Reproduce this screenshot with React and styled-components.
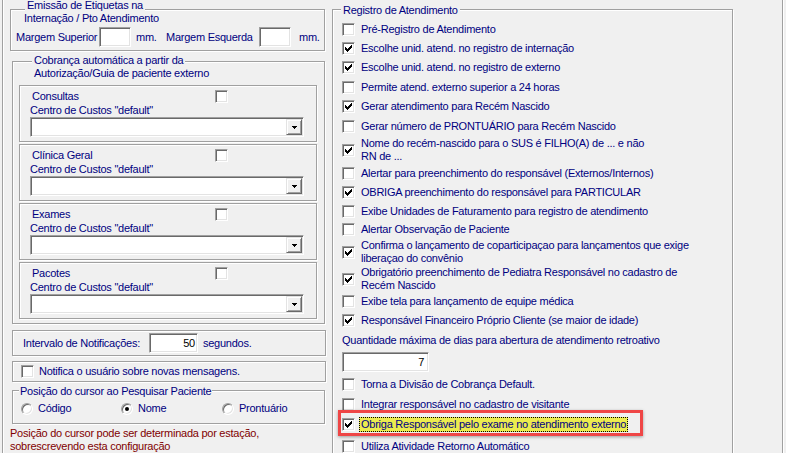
import React from "react";
import styled, { createGlobalStyle } from "styled-components";

const GlobalStyle = createGlobalStyle`
  html, body {
    margin: 0;
    padding: 0;
    background: #f0f0f0;
    overflow: hidden;
  }
  body {
    font-family: "Liberation Sans", Arial, sans-serif;
    font-size: 11px;
    line-height: 13px;
    letter-spacing: -0.25px;
    color: #000080;
  }
`;

const sunken = `
  background: #fff;
  border: 1px solid;
  border-color: #a0a0a0 #fff #fff #a0a0a0;
  box-shadow: inset 1px 1px 0 #696969, inset -1px -1px 0 #e3e3e3;
`;

const Window = styled.div`
  width: 786px;
  height: 453px;
  overflow: hidden;
  box-sizing: border-box;
  padding: 0 3px 0 2px;
`;

const Panel = styled.div`
  height: 100%;
  box-sizing: border-box;
  border-left: 1px solid #a0a0a0;
  border-right: 1px solid #a0a0a0;
  box-shadow: inset 1px 0 0 #fff, 1px 0 0 #fff;
  display: flex;
  align-items: flex-start;
  gap: 6px;
  padding-left: 7px;
`;

const LeftColumn = styled.div`
  width: 316px;
  flex: none;
  display: flex;
  flex-direction: column;
  align-items: flex-start;
  padding-top: 9px;
`;

const GroupBox = styled.div`
  box-sizing: border-box;
  flex: none;
  width: ${(p) => p.$w}px;
  height: ${(p) => p.$h}px;
  margin: ${(p) => p.$m || 0};
  border: 1px solid #a0a0a0;
  box-shadow: inset 1px 1px 0 #fff, 1px 1px 0 #fff;
`;

const InlineBox = styled(GroupBox)`
  display: flex;
  align-items: center;
  padding-left: ${(p) => p.$pl}px;
`;

const Caption = styled.div`
  margin-top: ${(p) => p.$top}px;
  padding-left: ${(p) => p.$left}px;
  line-height: 13px;
  white-space: nowrap;
`;

const CaptionLine = styled.span`
  background: #f0f0f0;
  padding: 0 ${(p) => p.$pad ?? 2}px;
  margin-left: ${(p) => (p.$shift || 0) - (p.$pad ?? 2)}px;
`;

const FieldRow = styled.div`
  display: flex;
  align-items: center;
  height: 20px;
  margin-top: 2px;
  padding-left: 5px;
  white-space: nowrap;
`;

const Label = styled.span`
  flex: none;
  width: ${(p) => (p.$w ? `${p.$w}px` : "auto")};
  margin-left: ${(p) => p.$ml || 0}px;
  white-space: nowrap;
`;

const TextBox = styled.div`
  box-sizing: border-box;
  flex: none;
  width: ${(p) => p.$w}px;
  height: 20px;
  ${sunken}
  color: #000;
  text-align: right;
  padding: 3px ${(p) => p.$pr ?? 3}px 0 0;
  line-height: 13px;
`;

const CategoryBox = styled(GroupBox)`
  padding-top: 4px;
`;

const CategoryHead = styled.div`
  display: flex;
  height: 13px;
  padding-left: 12px;
`;

const SubLabel = styled.div`
  margin-top: 1px;
  padding-left: 10px;
  height: 13px;
`;

const Combo = styled.div`
  box-sizing: border-box;
  width: 274px;
  height: 20px;
  margin-left: 10px;
  ${sunken}
  display: flex;
  justify-content: flex-end;
  padding: 1px;
`;

const DropButton = styled.span`
  box-sizing: border-box;
  width: 16px;
  height: 100%;
  background: #f0f0f0;
  border: 1px solid;
  border-color: #e3e3e3 #696969 #696969 #e3e3e3;
  box-shadow: inset 1px 1px 0 #fff, inset -1px -1px 0 #a0a0a0;
  display: flex;
  align-items: center;
  justify-content: center;
`;

const Check = styled.span`
  box-sizing: border-box;
  flex: none;
  width: 13px;
  height: 13px;
  margin-top: ${(p) => p.$mt || 0}px;
  ${sunken}
  display: flex;
  align-items: center;
  justify-content: center;
`;

const RadioRow = styled.div`
  display: flex;
  height: 13px;
  margin-top: 4px;
  padding-left: 8px;
`;

const RadioOption = styled.div`
  flex: none;
  width: ${(p) => p.$w}px;
  display: flex;
  align-items: center;
  gap: 5px;
`;

const Radio = styled.span`
  box-sizing: border-box;
  flex: none;
  width: 12px;
  height: 12px;
  border-radius: 50%;
  background: #fff;
  border: 1px solid;
  border-color: #a0a0a0 #fff #fff #a0a0a0;
  box-shadow: inset 1px 1px 0 #696969, inset -1px -1px 0 #e3e3e3;
  display: flex;
  align-items: center;
  justify-content: center;
  &::after {
    content: "";
    width: 4px;
    height: 4px;
    border-radius: 50%;
    background: ${(p) => (p.$on ? "#000" : "transparent")};
  }
`;

const Note = styled.div`
  margin-top: 3px;
  color: #800000;
  line-height: 13px;
  white-space: nowrap;
`;

const OptionList = styled.div`
  margin-top: 2.5px;
  padding-left: 9px;
  display: flex;
  flex-direction: column;
`;

const OptionRow = styled.div`
  position: relative;
  display: flex;
  align-items: flex-start;
  height: ${(p) => p.$h}px;
  flex: none;
  &::after {
    content: "";
    display: ${(p) => (p.$marked ? "block" : "none")};
    position: absolute;
    left: -4px;
    top: -4.5px;
    width: 305px;
    height: 26px;
    box-sizing: border-box;
    border: 3px solid #ef4646;
    box-shadow: 0 1px 3px rgba(0, 0, 0, 0.35);
  }
`;

const OptionText = styled.span`
  margin-left: 6px;
  padding-top: ${(p) => (p.$double ? 0 : 3)}px;
  white-space: nowrap;
`;

const FocusText = styled.span`
  margin: 2px 0 0 4px;
  padding: 0 1px;
  border: 1px dotted #000;
  background: #ecec4e;
  white-space: nowrap;
`;

const FieldLabel = styled.div`
  height: 21.5px;
  padding-top: 3px;
  box-sizing: border-box;
  white-space: nowrap;
`;

const RetroBox = styled(TextBox)`
  margin-bottom: 2.5px;
`;

const CheckMark = () => (
  <svg width="7" height="7" viewBox="0 0 7 7" shapeRendering="crispEdges">
    {[2, 3, 4, 3, 2, 1, 0].map((y, x) => (
      <rect key={x} x={x} y={y} width="1" height="3" fill="#000" />
    ))}
  </svg>
);

const CheckBox = ({ checked, mt }) => (
  <Check $mt={mt}>{checked && <CheckMark />}</Check>
);

const DownArrow = () => (
  <svg width="5" height="3" viewBox="0 0 5 3" shapeRendering="crispEdges">
    <rect x="0" y="0" width="5" height="1" fill="#000" />
    <rect x="1" y="1" width="3" height="1" fill="#000" />
    <rect x="2" y="2" width="1" height="1" fill="#000" />
  </svg>
);

const categories = ["Consultas", "Clínica Geral", "Exames", "Pacotes"];

const topOptions = [
  { text: "Pré-Registro de Atendimento", h: 19 },
  { text: "Escolhe unid. atend. no registro de internação", checked: true, h: 19 },
  { text: "Escolhe unid. atend. no registro de externo", checked: true, h: 20 },
  { text: "Permite atend. externo superior a 24 horas", h: 19 },
  { text: "Gerar atendimento para Recém Nascido", checked: true, h: 20 },
  { text: "Gerar número de PRONTUÁRIO para Recém Nascido", h: 20 },
  {
    text: ["Nome do recém-nascido para o SUS é FILHO(A) de ... e não", "RN de ..."],
    checked: true,
    h: 27,
  },
  { text: "Alertar para preenchimento do responsável (Externos/Internos)", h: 19 },
  { text: "OBRIGA preenchimento do responsável para PARTICULAR", checked: true, h: 19 },
  { text: "Exibe Unidades de Faturamento para registro de atendimento", h: 18 },
  { text: "Alertar Observação de Paciente", h: 19 },
  {
    text: ["Confirma o lançamento de coparticipaçao para lançamentos que exige", "liberaçao do convênio"],
    checked: true,
    h: 27,
  },
  {
    text: ["Obrigatório preenchimento de Pediatra Responsável no cadastro de", "Recém Nascido"],
    checked: true,
    h: 26,
  },
  { text: "Exibe tela para lançamento de equipe médica", h: 19 },
  { text: "Responsável Financeiro Próprio Cliente (se maior de idade)", checked: true, h: 20 },
];

const bottomOptions = [
  { text: "Torna a Divisão de Cobrança Default.", h: 20 },
  { text: "Integrar responsável no cadastro de visitante", h: 20 },
  { text: "Obriga Responsável pelo exame no atendimento externo", checked: true, focus: true, h: 22 },
  { text: "Utiliza Atividade Retorno Automático", h: 19 },
];

const Option = ({ text, checked, focus, h }) => {
  const double = Array.isArray(text);
  return (
    <OptionRow $h={h} $marked={focus}>
      <CheckBox checked={checked} mt={double ? 7 : 3} />
      {focus ? (
        <FocusText>{text}</FocusText>
      ) : (
        <OptionText $double={double}>
          {double ? (
            <>
              {text[0]}
              <br />
              {text[1]}
            </>
          ) : (
            text
          )}
        </OptionText>
      )}
    </OptionRow>
  );
};

const App = () => {
  return (
    <Window>
      <GlobalStyle />
      <Panel>
        <LeftColumn>
          <GroupBox $w={315} $h={42}>
            <Caption $top={-11} $left={13}>
              <CaptionLine $shift={3}>Emissão de Etiquetas na</CaptionLine>
              <br />
              Internação / Pto Atendimento
            </Caption>
            <FieldRow>
              <Label $w={83}>Margem Superior</Label>
              <TextBox $w={32} />
              <Label $w={30} $ml={5}>mm.</Label>
              <Label $w={93}>Margem Esquerda</Label>
              <TextBox $w={32} />
              <Label $ml={8}>mm.</Label>
            </FieldRow>
          </GroupBox>

          <GroupBox $w={313} $h={263} $m="10px 0 0 2px">
            <Caption $top={-8} $left={21}>
              <CaptionLine>Cobrança automática a partir da</CaptionLine>
              <br />
              Autorização/Guia de paciente externo
            </Caption>
            {categories.map((name, i) => (
              <CategoryBox key={name} $w={298} $h={57} $m={`${i === 0 ? 5 : 2}px 0 0 6px`}>
                <CategoryHead>
                  <Label $w={183}>{name}</Label>
                  <CheckBox />
                </CategoryHead>
                <SubLabel>Centro de Custos "default"</SubLabel>
                <Combo>
                  <DropButton>
                    <DownArrow />
                  </DropButton>
                </Combo>
              </CategoryBox>
            ))}
          </GroupBox>

          <InlineBox $w={314} $h={26} $m="6px 0 0 2px" $pl={10}>
            <Label $w={126}>Intervalo de Notificações:</Label>
            <TextBox $w={49} $pr={2}>50</TextBox>
            <Label $ml={5}>segundos.</Label>
          </InlineBox>

          <InlineBox $w={314} $h={21} $m="5px 0 0 2px" $pl={8}>
            <CheckBox />
            <Label $ml={5}>Notifica o usuário sobre novas mensagens.</Label>
          </InlineBox>

          <GroupBox $w={313} $h={34} $m="8px 0 0 2px">
            <Caption $top={-6} $left={7}>
              <CaptionLine $pad={1}>Posição do cursor ao Pesquisar Paciente</CaptionLine>
            </Caption>
            <RadioRow>
              <RadioOption $w={100}>
                <Radio />
                Código
              </RadioOption>
              <RadioOption $w={101}>
                <Radio $on />
                Nome
              </RadioOption>
              <RadioOption $w={100}>
                <Radio />
                Prontuário
              </RadioOption>
            </RadioRow>
          </GroupBox>

          <Note>
            Posição do cursor pode ser determinada por estação,
            <br />
            sobrescrevendo esta configuração
          </Note>
        </LeftColumn>

        <GroupBox $w={401} $h={470} $m="9px 0 0 0">
          <Caption $top={-6} $left={10}>
            <CaptionLine>Registro de Atendimento</CaptionLine>
          </Caption>
          <OptionList>
            {topOptions.map((o) => (
              <Option key={o.text.toString()} {...o} />
            ))}
            <FieldLabel>Quantidade máxima de dias para abertura de atendimento retroativo</FieldLabel>
            <RetroBox $w={87} $pr={4}>7</RetroBox>
            {bottomOptions.map((o) => (
              <Option key={o.text} {...o} />
            ))}
          </OptionList>
        </GroupBox>
      </Panel>
    </Window>
  );
};

export default App;
